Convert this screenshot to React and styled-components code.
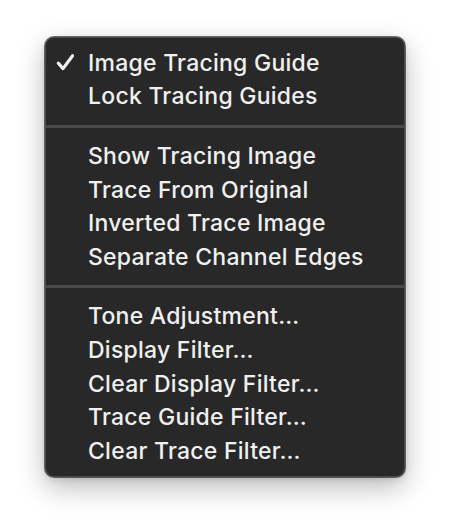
import React from 'react';
import styled, { createGlobalStyle } from 'styled-components';

const GlobalStyle = createGlobalStyle`
  html, body {
    margin: 0;
    padding: 0;
    background: #ffffff;
  }
  body {
    font-family: Inter, "Noto Sans", "Liberation Sans", sans-serif;
  }
`;

const Page = styled.div`
  width: 450px;
  height: 530px;
  padding: 37px 0 0 45px;
  box-sizing: border-box;
`;

const Menu = styled.ul`
  width: 360px;
  margin: 0;
  padding: 9px 0;
  box-sizing: border-box;
  list-style: none;
  background: #282828;
  border-radius: 9px;
  box-shadow: inset 0 0 0 1px rgba(255, 255, 255, 0.16), 0 0 0 1px rgba(0, 0, 0, 0.55),
    0 10px 28px rgba(0, 0, 0, 0.28), 0 2px 6px rgba(0, 0, 0, 0.12);
`;

const Item = styled.li`
  position: relative;
  display: flex;
  align-items: center;
  height: 33.6px;
  padding-left: 43px;
  color: #f0f0f0;
  font-size: 23px;
  font-weight: 500;
  letter-spacing: 0.25px;
  white-space: nowrap;
`;

const Check = styled.svg`
  position: absolute;
  left: 11px;
  top: 8px;
  width: 18px;
  height: 17px;
`;

const Separator = styled.li`
  height: 3px;
  margin: 11.5px 1px;
  background: #4a4a4a;
`;

const groups = [
  [
    { label: 'Image Tracing Guide', checked: true },
    { label: 'Lock Tracing Guides' },
  ],
  [
    { label: 'Show Tracing Image' },
    { label: 'Trace From Original' },
    { label: 'Inverted Trace Image' },
    { label: 'Separate Channel Edges' },
  ],
  [
    { label: 'Tone Adjustment…' },
    { label: 'Display Filter…' },
    { label: 'Clear Display Filter…' },
    { label: 'Trace Guide Filter…' },
    { label: 'Clear Trace Filter…' },
  ],
];

const App = () => {
  return (
    <Page>
      <GlobalStyle />
      <Menu>
        {groups.map((group, gi) => (
          <React.Fragment key={String(gi)}>
            {gi > 0 && <Separator />}
            {group.map(item => (
              <Item key={item.label}>
                {item.checked && (
                  <Check viewBox="0 0 18 17">
                    <path
                      d="M2.4 9.2 L7 14.6 L16.6 1.8"
                      fill="none"
                      stroke="#f0f0f0"
                      strokeWidth="3.2"
                      strokeLinecap="round"
                      strokeLinejoin="round"
                    />
                  </Check>
                )}
                {item.label}
              </Item>
            ))}
          </React.Fragment>
        ))}
      </Menu>
    </Page>
  );
};

export default App;
